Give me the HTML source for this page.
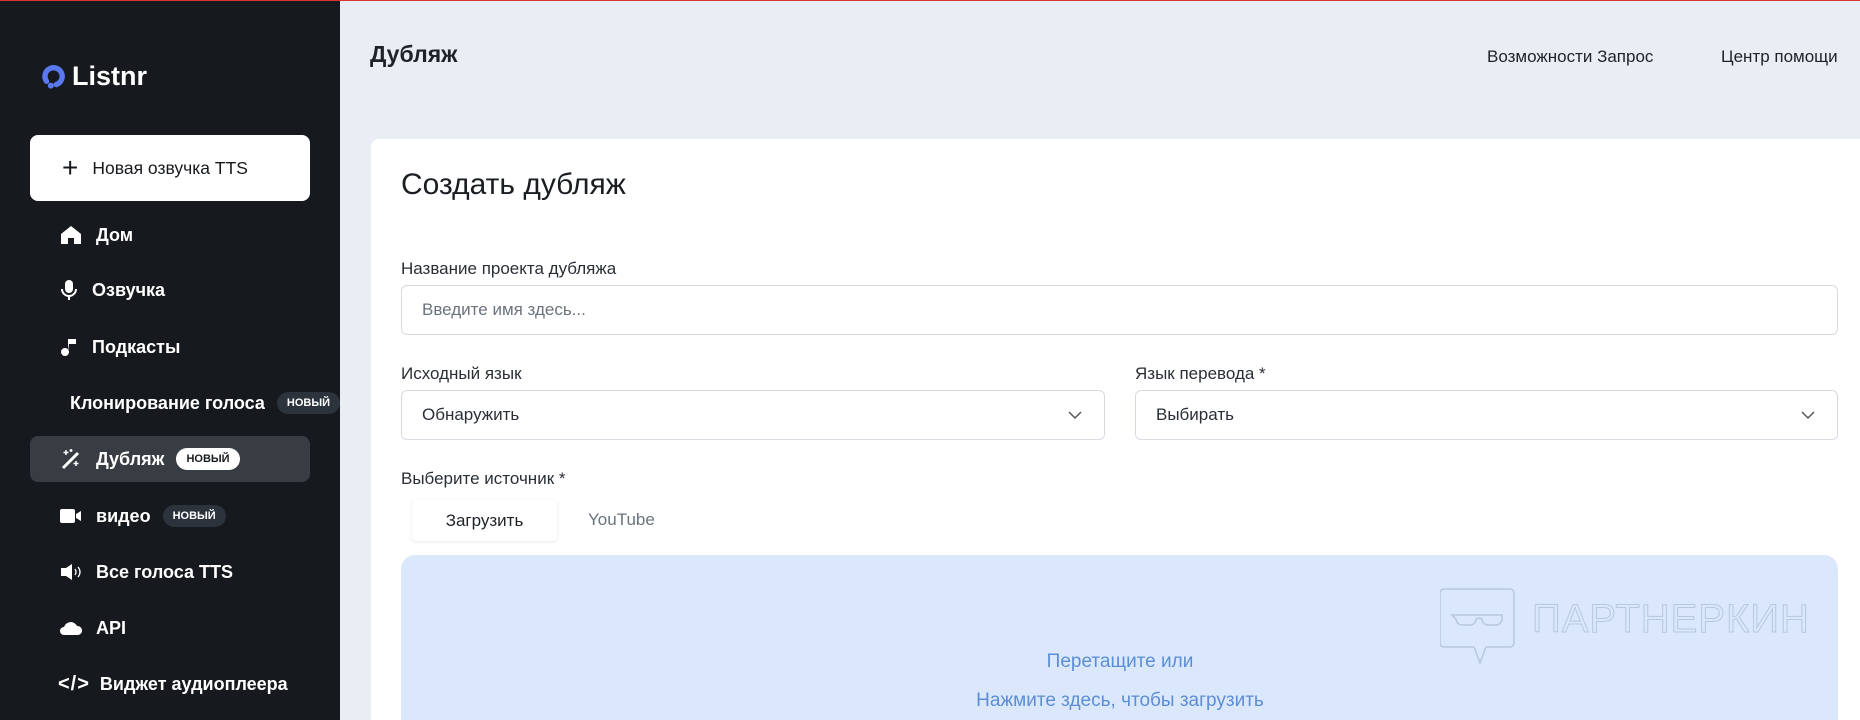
<!DOCTYPE html>
<html><head><meta charset="utf-8"><style>
*{box-sizing:border-box;margin:0;padding:0}
html,body{width:1860px;height:720px;overflow:hidden}
body{background:#e9edf4;font-family:"Liberation Sans","Noto Sans CJK SC",sans-serif;position:relative;color:#1f2328}
.top{position:absolute;left:0;top:0;width:1860px;height:1px;background:#d33}
.sb{position:absolute;left:0;top:1px;width:340px;height:719px;background:#16191d;color:#fff}
.abs{position:absolute}
.mi{position:absolute;left:60px;height:22px;font-weight:bold;font-size:18px;display:flex;align-items:center;white-space:nowrap}
.mi svg{margin-right:14px}
.badge{display:inline-block;background:#2c333d;color:#fff;font-size:11px;font-weight:bold;border-radius:12px;padding:5px 10px;margin-left:12px}
.lab{position:absolute;font-size:17px;color:#2a2f36}
.inp{position:absolute;border:1px solid #d6dbe2;border-radius:6px;background:#fff;font-size:17px;display:flex;align-items:center;padding-left:20px;color:#2a2f36}
.chev{position:absolute;right:22px;top:17px}
</style></head><body>
<div class="top"></div>
<div class="sb">
 <div class="abs" style="left:40px;top:60px;display:flex;align-items:center">
  <svg width="26" height="28" viewBox="0 0 24 26"><path d="M6 17A8 8 0 1 1 15 20" fill="none" stroke="#5a78f0" stroke-width="5" stroke-linecap="round"/><circle cx="10" cy="21" r="2.8" fill="#5a78f0"/></svg>
  <span style="font-weight:bold;font-size:27px;margin-left:6px">Listnr</span>
 </div>
 <div class="abs" style="left:30px;top:134px;width:280px;height:66px;background:#fff;border-radius:8px;color:#16191d;font-size:17.5px;display:flex;align-items:center;padding-left:32px">
  <span style="font-size:28px;font-weight:300;margin-right:14px;line-height:1">+</span>Новая озвучка TTS
 </div>
 <div class="mi" style="top:223px"><svg width="22" height="20" viewBox="0 0 22 20"><path d="M1 9L11 1L21 9V19H14V13H8V19H1Z" fill="#fff"/></svg>Дом</div>
 <div class="mi" style="top:278px"><svg width="18" height="22" viewBox="0 0 18 22"><rect x="5" y="1" width="8" height="13" rx="4" fill="#fff"/><path d="M2 10a7 7 0 0 0 14 0M9 17v4" stroke="#fff" stroke-width="2" fill="none"/></svg>Озвучка</div>
 <div class="mi" style="top:335px"><svg width="18" height="20" viewBox="0 0 18 20"><circle cx="5" cy="15" r="4" fill="#fff"/><path d="M8 15V2h8v5H9" fill="#fff"/></svg>Подкасты</div>
 <div class="mi" style="top:391px;left:70px">Клонирование голоса<span class="badge">НОВЫЙ</span></div>
 <div class="abs" style="left:30px;top:435px;width:280px;height:46px;background:#383c43;border-radius:8px"></div>
 <div class="mi" style="top:447px"><svg width="22" height="22" viewBox="0 0 22 22"><path d="M3 20L18 5" stroke="#fff" stroke-width="3"/><path d="M6 2v5M3.5 4.5h5M16 13v5M13.5 15.5h5M11 1v3M9.5 2.5h3" stroke="#fff" stroke-width="1.5"/></svg>Дубляж<span class="badge" style="background:#fff;color:#16191d">НОВЫЙ</span></div>
 <div class="mi" style="top:504px"><svg width="22" height="16" viewBox="0 0 22 16"><rect x="0" y="1" width="15" height="14" rx="2" fill="#fff"/><path d="M16 6l5-3v10l-5-3z" fill="#fff"/></svg>видео<span class="badge">НОВЫЙ</span></div>
 <div class="mi" style="top:560px"><svg width="22" height="18" viewBox="0 0 22 18"><path d="M1 5h5l6-4v16l-6-4H1z" fill="#fff"/><path d="M15 6q2 3 0 6M18 4q4 5 0 10" stroke="#fff" stroke-width="1.3" fill="none"/></svg>Все голоса TTS</div>
 <div class="mi" style="top:616px"><svg width="22" height="14" viewBox="0 0 22 14"><path d="M4 14a4 4 0 0 1 0-8a7 7 0 0 1 13-1a4.5 4.5 0 0 1 1 9z" fill="#fff"/></svg>API</div>
 <div class="mi" style="top:672px;left:58px"><span style="font-size:20px;margin-right:10px;letter-spacing:1px">&lt;/&gt;</span>Виджет аудиоплеера</div>
</div>
<div class="abs" style="left:370px;top:41px;font-size:23px;font-weight:bold;color:#1f2328">Дубляж</div>
<div class="abs" style="left:1487px;top:47px;font-size:17px">Возможности Запрос</div>
<div class="abs" style="left:1721px;top:47px;font-size:17px">Центр помощи</div>
<div class="abs" style="left:371px;top:139px;width:1489px;height:581px;background:#fff;border-radius:8px 0 0 0"></div>
<div class="abs" style="left:401px;top:168px;font-size:30px;color:#1a1e23">Создать дубляж</div>
<div class="lab" style="left:401px;top:259px">Название проекта дубляжа</div>
<div class="inp" style="left:401px;top:285px;width:1437px;height:50px;color:#6b737d">Введите имя здесь...</div>
<div class="lab" style="left:401px;top:364px">Исходный язык</div>
<div class="lab" style="left:1135px;top:364px">Язык перевода *</div>
<div class="inp" style="left:401px;top:390px;width:704px;height:50px">Обнаружить<svg class="chev" width="14" height="14" viewBox="0 0 14 14"><path d="M1 4l6 6 6-6" stroke="#555" stroke-width="1.5" fill="none"/></svg></div>
<div class="inp" style="left:1135px;top:390px;width:703px;height:50px">Выбирать<svg class="chev" width="14" height="14" viewBox="0 0 14 14"><path d="M1 4l6 6 6-6" stroke="#555" stroke-width="1.5" fill="none"/></svg></div>
<div class="lab" style="left:401px;top:469px">Выберите источник *</div>
<div class="abs" style="left:412px;top:500px;width:145px;height:41px;background:#fff;box-shadow:0 1px 3px rgba(0,0,0,.1);border-radius:4px;font-size:17px;display:flex;align-items:center;justify-content:center">Загрузить</div>
<div class="abs" style="left:588px;top:510px;font-size:17px;color:#6b737d">YouTube</div>
<div class="abs" style="left:401px;top:555px;width:1437px;height:165px;background:#dbe8fc;border-radius:14px 14px 0 0"></div>
<svg class="abs" style="left:1440px;top:587px" width="76" height="80" viewBox="0 0 76 80"><path d="M4 2h66a4 4 0 0 1 4 4v50a4 4 0 0 1-4 4H46l-6 16l-6-16H4a4 4 0 0 1-4-4V6a4 4 0 0 1 4-4z" fill="none" stroke="#b9c7dc" stroke-width="1.5"/><path d="M12 28h50v4a6 6 0 0 1-6 6h-8a6 6 0 0 1-6-6a6 6 0 0 0-6 0a6 6 0 0 1-6 6h-8a6 6 0 0 1-6-6z" fill="none" stroke="#b9c7dc" stroke-width="1.5"/></svg>
<div class="abs" style="left:1532px;top:597px;font-size:40px;color:transparent;-webkit-text-stroke:1px #b9c7dc;letter-spacing:1px">ПАРТНЕРКИН</div>
<div class="abs" style="left:0;width:2240px;top:651px;text-align:center;font-size:19px;color:#5b8ed6">Перетащите или</div>
<div class="abs" style="left:0;width:2240px;top:690px;text-align:center;font-size:19px;color:#5b8ed6">Нажмите здесь, чтобы загрузить</div>
</body></html>
